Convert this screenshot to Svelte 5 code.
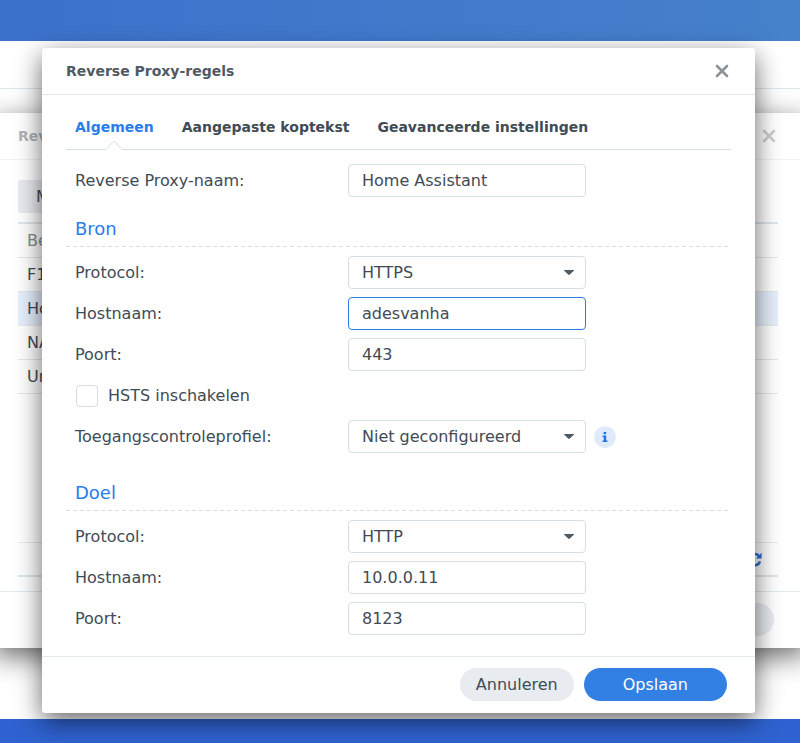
<script>
	let name = $state("Home Assistant");
	let hsts = $state(false);
	let profile = $state("Niet geconfigureerd");
	let source = $state({ protocol: "HTTPS", host: "adesvanha", port: "443" });
	let target = $state({ protocol: "HTTP", host: "10.0.0.11", port: "8123" });
	let tab = $state(0);
	let activeField = $state("source-host");

	const tabs = ["Algemeen", "Aangepaste koptekst", "Geavanceerde instellingen"];
	const rules = ["F1", "Ho", "NA", "Un"];
</script>

{#snippet cross()}
	<svg width="14" height="14" viewBox="0 0 14 14" aria-hidden="true">
		<path d="M2 2L12 12M12 2L2 12" fill="none" stroke="currentColor" stroke-width="2.6" stroke-linecap="round" />
	</svg>
{/snippet}

{#snippet arrow()}
	<svg class="arrow" width="10" height="5" viewBox="0 0 10 5" aria-hidden="true">
		<path d="M0 0H10V.6L5.6 4.8H4.4L0 .6Z" fill="#505a64" />
	</svg>
{/snippet}

{#snippet endpoint(id, values)}
	<div class="row">
		<label for="{id}-protocol">Protocol:</label>
		<div class="select">
			<select id="{id}-protocol" bind:value={values.protocol}>
				<option>HTTP</option>
				<option>HTTPS</option>
			</select>
			{@render arrow()}
		</div>
	</div>
	<div class="row">
		<label for="{id}-host">Hostnaam:</label>
		<input
			type="text"
			id="{id}-host"
			class:active={activeField == `${id}-host`}
			onfocus={() => (activeField = `${id}-host`)}
			bind:value={values.host} />
	</div>
	<div class="row">
		<label for="{id}-port">Poort:</label>
		<input
			type="text"
			id="{id}-port"
			class:active={activeField == `${id}-port`}
			onfocus={() => (activeField = `${id}-port`)}
			bind:value={values.port} />
	</div>
{/snippet}

<div class="desktop">
	<div class="window app"><div class="app-bar"></div></div>

	<section class="window list" inert>
		<header>
			<h2>Rev</h2>
			<button class="close" aria-label="Sluiten">{@render cross()}</button>
		</header>
		<div class="list-body">
			<button class="tool">M</button>
			<table>
				<thead>
					<tr><th>Be</th></tr>
				</thead>
				<tbody>
					{#each rules as rule, i}
						<tr class:selected={i == 1}><td>{rule}</td></tr>
					{/each}
				</tbody>
			</table>
			<div class="paging">
				<svg width="15" height="15" viewBox="0 0 15 15" aria-hidden="true">
					<path d="M12.2 4.6A5.6 5.6 0 0 0 2 6M2.6 10.2A5.6 5.6 0 0 0 13 9.4" fill="none" stroke="#2a6fdb" stroke-width="2.4" />
					<path d="M14.6 .8V6.4H9ZM.4 14.2V8.6H6Z" fill="#2a6fdb" />
				</svg>
			</div>
		</div>
		<footer><button class="pill" aria-label="Sluiten"></button></footer>
	</section>

	<section class="window dialog" role="dialog" aria-labelledby="dialog-title">
		<header>
			<h2 id="dialog-title">Reverse Proxy-regels</h2>
			<button class="close" aria-label="Sluiten">{@render cross()}</button>
		</header>
		<div class="content">
			<nav>
				{#each tabs as label, i}
					<button class:current={tab == i} onclick={() => (tab = i)}>
						{label}
						{#if tab == i}
							<svg class="notch" width="18" height="10" viewBox="0 0 18 10" aria-hidden="true">
								<path d="M1 9.5L9 1L17 9.5V10H1Z" fill="#fff" />
								<path d="M0 9.5H1L9 1L17 9.5H18" fill="none" stroke="#d5dee6" />
							</svg>
						{/if}
					</button>
				{/each}
			</nav>
			<div class="fields">
				<div class="row">
					<label for="name">Reverse Proxy-naam:</label>
					<input type="text" id="name" bind:value={name} />
				</div>
			</div>

			<h3>Bron</h3>
			<div class="fields">
				{@render endpoint("source", source)}
				<label class="check">
					<input type="checkbox" bind:checked={hsts} />
					HSTS inschakelen
				</label>
				<div class="row">
					<label for="profile">Toegangscontroleprofiel:</label>
					<div class="select">
						<select id="profile" bind:value={profile}>
							<option>Niet geconfigureerd</option>
						</select>
						{@render arrow()}
					</div>
					<button class="info" aria-label="Info">
						<svg width="22" height="22" viewBox="0 0 22 22" aria-hidden="true">
							<circle cx="11" cy="11" r="10.8" fill="#dfeafc" />
							<path d="M9.6 6H12.2V8.2H9.6ZM8.6 9.6H12.2V14.4H13.4V16H8.6V14.4H9.8V11.2H8.6Z" fill="#1f74e6" />
						</svg>
					</button>
				</div>
			</div>

			<h3 class="second">Doel</h3>
			<div class="fields">
				{@render endpoint("target", target)}
			</div>
		</div>
		<footer>
			<button class="pill">Annuleren</button>
			<button class="pill primary">Opslaan</button>
		</footer>
	</section>
</div>

<style>
	:global(body) {
		margin: 0;
	}
	.desktop {
		position: relative;
		display: flow-root;
		min-height: 100vh;
		overflow: hidden;
		background: linear-gradient(#0000 50%, #2f62d0 50%), linear-gradient(90deg, #3c71cb, #4681cb);
		color: #414b55;
		font: 16px/20px Verdana, "DejaVu Sans", sans-serif;
	}
	button,
	input,
	select {
		box-sizing: border-box;
		margin: 0;
		border: 0;
		padding: 0;
		background: none;
		color: inherit;
		font: inherit;
	}
	h2,
	h3 {
		margin: 0;
	}
	svg {
		display: block;
	}
	.window {
		background: #fff;
		box-shadow: 0 8px 26px rgba(0, 0, 0, 0.6);
	}

	/* windows behind the dialog */
	.app {
		position: absolute;
		inset: 41px -8px 24px;
		box-shadow: none;
	}
	.app-bar {
		height: 47px;
		border-bottom: 1px solid #dfe6ed;
	}
	.list {
		position: absolute;
		inset: 113px -6px 95px;
		display: flex;
		flex-direction: column;
	}
	.list header {
		padding: 0 28px 0 24px;
		border-color: #f0f2f4;
	}
	.list h2,
	.list .close {
		opacity: 0.45;
	}
	.list-body {
		flex: 1;
		display: flex;
		flex-direction: column;
		padding: 20px 28px 14px 24px;
	}
	.tool {
		align-self: flex-start;
		height: 33px;
		margin-bottom: 9px;
		padding: 0 18px;
		border-radius: 3px;
		background: #e8ebf0;
	}
	table {
		border-top: 2px solid #dfe6ed;
		border-spacing: 0;
		text-align: left;
	}
	th,
	td {
		height: 33px;
		padding: 0 9px;
		border-bottom: 1px solid #e3e8ed;
	}
	th {
		color: #858c94;
		font-weight: normal;
	}
	.selected td {
		background: #e6effc;
	}
	.paging {
		display: flex;
		align-items: center;
		justify-content: flex-end;
		height: 32px;
		margin-top: auto;
		padding-right: 16px;
		border-top: 1px solid #e6eaee;
		border-bottom: 2px solid #dfe6ed;
	}
	.list .pill {
		width: 114px;
		margin-right: 4px;
	}

	/* shared window parts */
	header {
		display: flex;
		align-items: center;
		justify-content: space-between;
		height: 46px;
		padding: 0 24px;
		border-bottom: 1px solid #dfe6ed;
	}
	h2 {
		color: #505a64;
		font-size: 14px;
	}
	.close {
		padding: 2px;
		color: #8c939a;
	}
	footer {
		display: flex;
		justify-content: flex-end;
		gap: 10px;
		padding: 11px 28px 12px;
		border-top: 1px solid #e3e9ef;
	}
	.pill {
		height: 33px;
		padding: 0 16px;
		border-radius: 17px;
		background: #e8ebf0;
	}
	.primary {
		padding: 0 39px;
		background: #3280e4;
		color: #fff;
	}

	.dialog {
		position: relative;
		margin: 48px 45px 30px 42px;
		border-radius: 3px;
	}
	.content {
		padding: 16px 24px 21px;
	}
	nav {
		display: flex;
		gap: 28px;
		padding: 0 9px;
		border-bottom: 1px solid #d5dee6;
	}
	nav button {
		position: relative;
		height: 38px;
		padding-bottom: 6px;
		font-size: 14px;
		font-weight: bold;
	}
	.current {
		color: #2a7de9;
	}
	.notch {
		position: absolute;
		bottom: -1px;
		left: calc(50% - 9px);
	}
	.fields {
		display: grid;
		gap: 8px;
		padding: 9px 9px 0;
	}
	nav + .fields {
		padding-top: 14px;
	}
	.row {
		display: grid;
		grid-template-columns: 273px 238px auto;
		align-items: center;
		justify-content: start;
	}
	input[type="text"],
	select {
		width: 100%;
		height: 33px;
		padding: 0 13px;
		border: 1px solid #d5dee6;
		border-radius: 4px;
		background: #fff;
		outline: none;
	}
	input.active {
		border-color: #2a7de9;
	}
	.select {
		display: grid;
		align-items: center;
	}
	.select > :global(*) {
		grid-area: 1 / 1;
	}
	select {
		appearance: none;
	}
	.arrow {
		justify-self: end;
		margin-right: 12px;
		pointer-events: none;
	}
	.check {
		display: flex;
		align-items: center;
		gap: 10px;
		height: 33px;
	}
	.check input {
		appearance: none;
		width: 22px;
		height: 22px;
		margin-left: 1px;
		border: 1px solid #d5dee6;
		border-radius: 4px;
	}
	.check input:checked {
		background: #3280e4;
	}
	.info {
		margin-left: 8px;
	}
	h3 {
		padding: 20px 9px 6px;
		background: repeating-linear-gradient(90deg, #d5dee6 0 4px, #0000 4px 7px) bottom / 100% 1px no-repeat;
		color: #2a7de9;
		font-size: 18px;
		font-weight: normal;
		line-height: 24px;
	}
	.second {
		padding-top: 28px;
	}
</style>
